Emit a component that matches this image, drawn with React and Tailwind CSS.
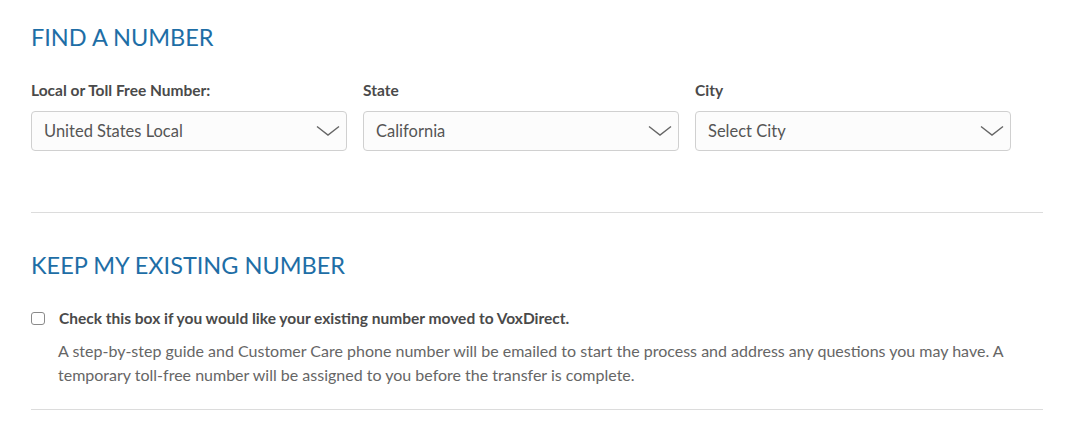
import React from 'react';

const font = { fontFamily: 'Lato, "Liberation Sans", sans-serif' };

function Chevron() {
  return (
    <svg width="24" height="12" viewBox="0 0 24 12" fill="none" className="shrink-0">
      <path d="M1 1.5 L12 10 L23 1.5" stroke="#666" strokeWidth="1.4" />
    </svg>
  );
}

function SelectBox({ label, value }) {
  return (
    <div className="w-[316px]">
      <div className="text-[15.5px] font-bold text-[#4a4a4a] leading-5 mb-[11px]">{label}</div>
      <div className="h-10 flex items-center justify-between pl-3 pr-[6px] border border-[#d0d0d0] rounded bg-[#fcfcfc]">
        <span className="text-[16.5px] text-[#555]">{value}</span>
        <Chevron />
      </div>
    </div>
  );
}

export default function App() {
  return (
    <div className="bg-white min-h-screen pl-[31px] pt-[22px]" style={font}>
      <div className="w-[1012px]">
        <h2 className="text-[23.5px] leading-[30px] text-[#1e6ea6] font-normal">FIND A NUMBER</h2>

        <div className="flex gap-4 mt-[28px]">
          <SelectBox label="Local or Toll Free Number:" value="United States Local" />
          <SelectBox label="State" value="California" />
          <SelectBox label="City" value="Select City" />
        </div>

        <div className="border-t border-[#dcdcdc] mt-[61px]" />

        <h2 className="text-[23.5px] leading-[30px] text-[#1e6ea6] font-normal mt-[37px]">KEEP MY EXISTING NUMBER</h2>

        <div className="flex items-center gap-[14px] mt-[28px]">
          <span className="w-[14px] h-[13px] border border-[#8a8a8a] rounded-[3px] bg-white shrink-0" />
          <span className="text-[15.5px] font-bold text-[#4a4a4a] leading-5">
            Check this box if you would like your existing number moved to VoxDirect.
          </span>
        </div>

        <p className="text-[16px] leading-6 text-[#666] pl-[27px] mt-[11px]">
          A step-by-step guide and Customer Care phone number will be emailed to start the process and address any questions you may have. A temporary toll-free number will be assigned to you before the transfer is complete.
        </p>

        <div className="border-t border-[#dcdcdc] mt-[22px]" />
      </div>
    </div>
  );
}
